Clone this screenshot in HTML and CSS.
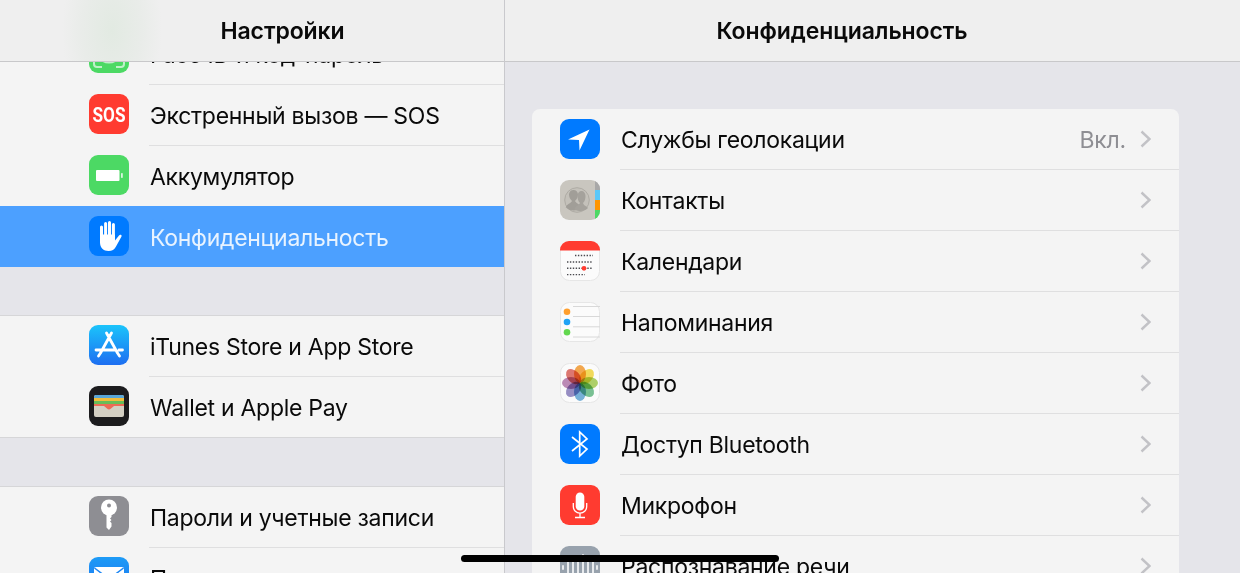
FILE: index.html
```html
<!DOCTYPE html>
<html lang="ru">

<head>
    <meta charset="UTF-8">
    <meta name="viewport" content="width=device-width, initial-scale=1.0">
    <title>Настройки</title>
    <link rel="stylesheet" href="styles.css">
</head>

<body>
    <div class="sidebar">
        <header class="nav-bar nav-bar-left"><h1>Настройки</h1></header>
        <div class="scroll-area">
            <div class="group group-first">
                <div class="row">
                    <span class="icon">
                        <svg viewBox="0 0 40 40"><rect width="40" height="40" rx="9" fill="#4cd964"/><path d="M5 27v4a3 3 0 0 0 3 3h5M35 27v4a3 3 0 0 1-3 3h-5M14 28c3 2 9 2 12 0" fill="none" stroke="#bff0c8" stroke-width="2"/></svg>
                    </span>
                    <div class="row-body"><span class="label">Face ID и код-пароль</span></div>
                </div>
                <div class="row">
                    <span class="icon">
                        <svg viewBox="0 0 40 40"><rect width="40" height="40" rx="9" fill="#ff3b30"/><text x="20" y="27.500" class="sos-text" textLength="33" lengthAdjust="spacingAndGlyphs">SOS</text></svg>
                    </span>
                    <div class="row-body"><span class="label">Экстренный вызов — SOS</span></div>
                </div>
                <div class="row row-short">
                    <span class="icon">
                        <svg viewBox="0 0 40 40"><rect width="40" height="40" rx="9" fill="#4cd964"/><rect x="7" y="15" width="23.5" height="11" rx="1" fill="#fff"/><rect x="32" y="18" width="1.8" height="5" rx="0.8" fill="#d9f5de"/></svg>
                    </span>
                    <div class="row-body row-body-plain"><span class="label">Аккумулятор</span></div>
                </div>
                <div class="row row-selected">
                    <span class="icon">
                        <svg viewBox="0 0 40 40"><rect width="40" height="40" rx="9" fill="#007aff"/><path d="M12.500 20V11M16.600 19V7.500M20.500 19V6.500M24.400 20V8.500" stroke="#fff" stroke-width="3" stroke-linecap="round" fill="none"/><path d="M11 18.500h15v6l4-5c1.200-1.300 3.200-.4 2.500.9l-5.500 10c-1.500 3-4 4.600-7.500 4.600-5 0-8.500-3.500-8.500-8.500z" fill="#fff"/></svg>
                    </span>
                    <div class="row-body row-body-plain"><span class="label">Конфиденциальность</span></div>
                </div>
            </div>

            <div class="group">
                <div class="row">
                    <span class="icon">
                        <svg viewBox="0 0 40 40"><defs><linearGradient id="appstore" x1="0" y1="0" x2="0" y2="1"><stop offset="0" stop-color="#1bc4fb"/><stop offset="1" stop-color="#1d6ef1"/></linearGradient></defs><rect width="40" height="40" rx="9" fill="url(#appstore)"/><path d="M17.500 8l11 20M22.500 8l-11 20M7 25h18M30 25h3.500M9.500 31l2-3M30.500 31l-2-3" stroke="#fff" stroke-width="2.800" stroke-linecap="round" fill="none"/></svg>
                    </span>
                    <div class="row-body"><span class="label">iTunes Store и App Store</span></div>
                </div>
                <div class="row">
                    <span class="icon">
                        <svg viewBox="0 0 40 40"><rect width="40" height="40" rx="9" fill="#1c1c1e"/><rect x="5" y="9" width="30" height="22" rx="2" fill="#d4d0c4"/><path d="M5 11a2 2 0 0 1 2-2h26a2 2 0 0 1 2 2v1H5z" fill="#5aa7d8"/><rect x="5" y="12" width="30" height="3" fill="#f2bd3c"/><rect x="5" y="15" width="30" height="3" fill="#69bd58"/><path d="M5 18h30v2H25l-3 2.500a3 3 0 0 1-4 0L15 20H5z" fill="#ee6a55"/></svg>
                    </span>
                    <div class="row-body"><span class="label">Wallet и Apple Pay</span></div>
                </div>
            </div>

            <div class="group">
                <div class="row">
                    <span class="icon">
                        <svg viewBox="0 0 40 40"><rect width="40" height="40" rx="9" fill="#8e8e93"/><circle cx="20" cy="11.500" r="8" fill="#fff"/><path d="M17.500 17h5v4l-1.500 1.500 1.500 1.500-1.500 1.500 1.500 1.500v3.500L20 34l-2.500-2.500z" fill="#fff"/><circle cx="20" cy="9.500" r="2" fill="#8e8e93"/></svg>
                    </span>
                    <div class="row-body"><span class="label">Пароли и учетные записи</span></div>
                </div>
                <div class="row">
                    <span class="icon">
                        <svg viewBox="0 0 40 40"><defs><linearGradient id="mail" x1="0" y1="0" x2="0" y2="1"><stop offset="0" stop-color="#1d9bf6"/><stop offset="1" stop-color="#1d6ef1"/></linearGradient></defs><rect width="40" height="40" rx="9" fill="url(#mail)"/><rect x="5" y="10" width="30" height="21" rx="2" fill="#fff"/><path d="M5.500 11l14.500 11 14.500-11" fill="none" stroke="#1d86f3" stroke-width="1.500"/></svg>
                    </span>
                    <div class="row-body"><span class="label">Почта</span></div>
                </div>
            </div>
        </div>
    </div>

    <main class="detail">
        <header class="nav-bar nav-bar-right"><h1>Конфиденциальность</h1></header>
        <div class="detail-scroll">
            <div class="card">
                <div class="row">
                    <span class="icon">
                        <svg viewBox="0 0 40 40"><rect width="40" height="40" rx="9" fill="#007aff"/><path d="M29.500 10.500L8 20.500l11 .5.500 10.500z" fill="#fff"/></svg>
                    </span>
                    <div class="row-body">
                        <span class="label">Службы геолокации</span>
                        <span class="value">Вкл.</span>
                        <svg class="chevron" viewBox="0 0 11 18"><path d="M1.500 1.500L9.500 9l-8 7.500"/></svg>
                    </div>
                </div>
                <div class="row">
                    <span class="icon">
                        <svg viewBox="0 0 40 40"><defs><clipPath id="contacts-clip"><rect width="40" height="40" rx="9"/></clipPath></defs><g clip-path="url(#contacts-clip)"><rect width="40" height="40" fill="#c9c6bf"/><rect x="35" width="5" height="10" fill="#a8a8a8"/><rect x="35" y="10" width="5" height="10" fill="#5ac8fa"/><rect x="35" y="20" width="5" height="10" fill="#ff9500"/><rect x="35" y="30" width="5" height="10" fill="#4cd964"/></g><circle cx="17" cy="20" r="12.300" fill="#c4c1ba" stroke="#aeaba4" stroke-width="1"/><path d="M6 27c.5-3 5-3.500 6-6-2-2-3-4-3-6.500C9 12 11 10 13.500 10s4.500 2 4.500 4.500c0 2.500-1 4.500-3 6.500 1 2.500 5 3 6 6-3 4.500-11 5-15.500 0z" fill="#a19e98"/><path d="M14.500 29.500c.5-3.500 4.500-4 5.500-6.500-2-2-2.500-4.500-2.500-7 0-3 1.800-5 4-5s4 2 4 5c0 2.500-.5 5-2.500 7 .5 2.500 3.500 3 5 5-3 3.500-8.500 4-13.500 1.500z" fill="#a5a29c"/></svg>
                    </span>
                    <div class="row-body">
                        <span class="label">Контакты</span>
                        <svg class="chevron" viewBox="0 0 11 18"><path d="M1.500 1.500L9.500 9l-8 7.500"/></svg>
                    </div>
                </div>
                <div class="row">
                    <span class="icon">
                        <svg viewBox="0 0 40 40"><rect x=".5" y=".5" width="39" height="39" rx="9" fill="#fbfbfb" stroke="#e6e6e6"/><path d="M0 9.500V9a9 9 0 0 1 9-9h22a9 9 0 0 1 9 9v.5z" fill="#ff3b30"/><path d="M15 14.500h18M7 21h26M7 27.300h26M7 33.600h18" stroke="#4a4a4f" stroke-width="1.400" stroke-dasharray="1.400 1.500" fill="none"/><circle cx="24" cy="27.300" r="2.400" fill="#ff3b30"/></svg>
                    </span>
                    <div class="row-body">
                        <span class="label">Календари</span>
                        <svg class="chevron" viewBox="0 0 11 18"><path d="M1.500 1.500L9.500 9l-8 7.500"/></svg>
                    </div>
                </div>
                <div class="row">
                    <span class="icon">
                        <svg viewBox="0 0 40 40"><rect x=".5" y=".5" width="39" height="39" rx="9" fill="#fbfbfb" stroke="#e6e6e6"/><path d="M13 4.500h27M13 14.500h27M13 24.800h27M13 35h27" stroke="#d8d8d8" fill="none"/><circle cx="7" cy="9.700" r="3.300" fill="#ff9f2e"/><circle cx="7" cy="20" r="3.300" fill="#1fa2f5"/><circle cx="7" cy="30.300" r="3.300" fill="#63d84f"/></svg>
                    </span>
                    <div class="row-body">
                        <span class="label">Напоминания</span>
                        <svg class="chevron" viewBox="0 0 11 18"><path d="M1.500 1.500L9.500 9l-8 7.500"/></svg>
                    </div>
                </div>
                <div class="row">
                    <span class="icon">
                        <svg viewBox="0 0 40 40"><rect x=".5" y=".5" width="39" height="39" rx="9" fill="#fbfbfb" stroke="#e6e6e6"/><g class="petals"><ellipse cx="20" cy="11" rx="6" ry="9" fill="#f5a13c"/><ellipse cx="20" cy="11" rx="6" ry="9" fill="#f4da49" transform="rotate(45 20 20)"/><ellipse cx="20" cy="11" rx="6" ry="9" fill="#a8cf5a" transform="rotate(90 20 20)"/><ellipse cx="20" cy="11" rx="6" ry="9" fill="#6dbd8a" transform="rotate(135 20 20)"/><ellipse cx="20" cy="11" rx="6" ry="9" fill="#6aabd8" transform="rotate(180 20 20)"/><ellipse cx="20" cy="11" rx="6" ry="9" fill="#8e84c0" transform="rotate(225 20 20)"/><ellipse cx="20" cy="11" rx="6" ry="9" fill="#b77fb0" transform="rotate(270 20 20)"/><ellipse cx="20" cy="11" rx="6" ry="9" fill="#dd6a62" transform="rotate(315 20 20)"/></g></svg>
                    </span>
                    <div class="row-body">
                        <span class="label">Фото</span>
                        <svg class="chevron" viewBox="0 0 11 18"><path d="M1.500 1.500L9.500 9l-8 7.500"/></svg>
                    </div>
                </div>
                <div class="row">
                    <span class="icon">
                        <svg viewBox="0 0 40 40"><rect width="40" height="40" rx="9" fill="#007aff"/><path d="M12 13l15 12-7.300 7V8L27 15 12 27" fill="none" stroke="#fff" stroke-width="1.700"/></svg>
                    </span>
                    <div class="row-body">
                        <span class="label">Доступ Bluetooth</span>
                        <svg class="chevron" viewBox="0 0 11 18"><path d="M1.500 1.500L9.500 9l-8 7.500"/></svg>
                    </div>
                </div>
                <div class="row">
                    <span class="icon">
                        <svg viewBox="0 0 40 40"><rect width="40" height="40" rx="9" fill="#ff3b30"/><rect x="15.700" y="7.500" width="8.600" height="18" rx="4.300" fill="#fff"/><path d="M13.300 18v3.500a6.700 6.700 0 0 0 13.400 0V18M20 28.200V32M15 32.500h10" fill="none" stroke="#fff" stroke-width="1.300"/></svg>
                    </span>
                    <div class="row-body">
                        <span class="label">Микрофон</span>
                        <svg class="chevron" viewBox="0 0 11 18"><path d="M1.500 1.500L9.500 9l-8 7.500"/></svg>
                    </div>
                </div>
                <div class="row">
                    <span class="icon">
                        <svg viewBox="0 0 40 40"><rect width="40" height="40" rx="9" fill="#98a2ad"/><path d="M3 20v3M8 14v16M13 11v22M18 14v16M23 9v24M28 14v16M33 12v20M37 20v3" stroke="#e8ebee" stroke-width="2" stroke-linecap="round" fill="none"/></svg>
                    </span>
                    <div class="row-body">
                        <span class="label">Распознавание речи</span>
                        <svg class="chevron" viewBox="0 0 11 18"><path d="M1.500 1.500L9.500 9l-8 7.500"/></svg>
                    </div>
                </div>
            </div>
        </div>
    </main>

    <div class="home-indicator"></div>
</body>

</html>
```

FILE: styles.css
```css
* {
    margin: 0;
    padding: 0;
    box-sizing: border-box;
    font-family: Inter, "Noto Sans", sans-serif;
}

body {
    display: flex;
    height: 100vh;
    overflow: hidden;
    background: #e5e5ea;
    color: #0a0a0a;
}

.sidebar {
    display: flex;
    flex-direction: column;
    width: 505px;
    flex-shrink: 0;
    border-right: 1px solid #c9c9cd;
}

.detail {
    display: flex;
    flex-direction: column;
    flex: 1;
    min-width: 0;
}

.nav-bar {
    display: flex;
    align-items: center;
    justify-content: center;
    height: 62px;
    flex-shrink: 0;
    border-bottom: 1px solid #c8c8ca;
    background: #efefef;
}

.nav-bar h1 {
    font-size: 23px;
    font-weight: 600;
    letter-spacing: -0.1px;
}

.nav-bar-left {
    padding-left: 61px;
    background: radial-gradient(ellipse 50px 90px at 112px 30px, #e2eae2 0%, #e9ece9 60%, #efefef 100%);
}

.nav-bar-right {
    padding-right: 61px;
}

.scroll-area {
    flex: 1;
    overflow: hidden;
}

.group {
    margin-top: 48px;
    border-top: 1px solid #d6d6d8;
}

.group-first {
    margin-top: -38px;
    border-top: 0;
}

.row {
    display: flex;
    height: 61px;
    padding-left: 89px;
    background: #f4f4f4;
}

.row-short {
    height: 60px;
}

.row-body {
    display: flex;
    align-items: center;
    flex: 1;
    min-width: 0;
    margin-left: 20px;
    padding-right: 28px;
    border-bottom: 1px solid #dfdfe0;
}

.row-body-plain {
    border-bottom: 0;
}

.group:not(.group-first) .row:last-child .row-body {
    border-bottom: 0;
}

.group:not(.group-first) .row:last-child {
    height: 61px;
    border-bottom: 1px solid #d6d6d8;
}

.row-selected {
    background: #4ca0ff;
    color: #e8f3ff;
}

.row-selected .icon {
    margin-top: 10px;
}

.icon {
    display: block;
    width: 40px;
    height: 40px;
    margin-top: 9px;
    flex-shrink: 0;
}

.icon svg {
    display: block;
    width: 40px;
    height: 40px;
}

.label {
    flex: 1;
    padding: 2px 0 0 1px;
    font-size: 23px;
    letter-spacing: -0.28px;
    white-space: nowrap;
}

.value {
    margin-right: 14px;
    padding-top: 2px;
    font-size: 23px;
    letter-spacing: -0.22px;
    color: #8e8e93;
}

.chevron {
    width: 11px;
    height: 18px;
    flex-shrink: 0;
    fill: none;
    stroke: #c2c2c6;
    stroke-width: 2.4;
}

.sos-text {
    font-family: Roboto, sans-serif;
    font-size: 20px;
    font-weight: 700;
    fill: #fff;
    text-anchor: middle;
}

.petals ellipse {
    mix-blend-mode: multiply;
    opacity: 0.9;
}

.detail-scroll {
    flex: 1;
    min-height: 0;
    overflow: hidden;
    padding: 47px 61px 0 27px;
}

.card {
    border-radius: 8px 8px 0 0;
    overflow: hidden;
}

.card .row {
    padding-left: 28px;
}

.card .icon {
    margin-top: 10px;
}

.card .row-body {
    margin-left: 20px;
}

.home-indicator {
    position: absolute;
    left: 461px;
    top: 555px;
    width: 318px;
    height: 7px;
    border-radius: 4px;
    background: #000;
}
```
